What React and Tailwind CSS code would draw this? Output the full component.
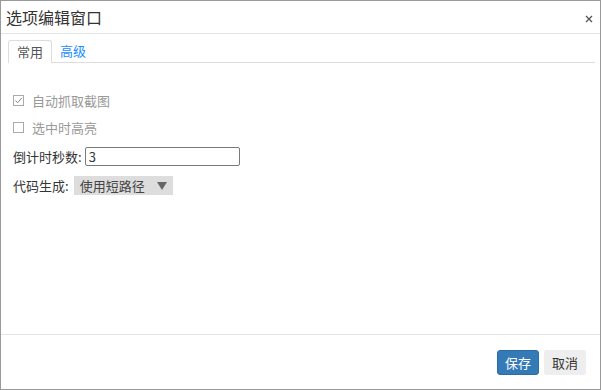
import React from 'react';

const font = { fontFamily: '"Noto Sans CJK SC", "Noto Sans", sans-serif' };

function CheckRow({ checked, label }) {
  return (
    <label className="flex items-center h-[27px] text-[13px] text-[#999]">
      <span className="ml-[5px] w-[11px] h-[11px] border border-[#aaa] bg-white flex items-center justify-center">
        {checked && (
          <svg width="9" height="9" viewBox="0 0 9 9">
            <path d="M1.5 4.5 L3.6 6.8 L7.8 1.8" fill="none" stroke="#888" strokeWidth="1" />
          </svg>
        )}
      </span>
      <span className="ml-[8px]">{label}</span>
    </label>
  );
}

export default function App() {
  return (
    <div className="w-[601px] h-[390px] bg-white border border-[#999] flex flex-col" style={font}>
      <div className="h-[33px] shrink-0 border-b border-[#e5e5e5] flex items-center justify-between pl-[5px] pr-[7px]">
        <span className="text-[16px] text-[#333]">选项编辑窗口</span>
        <svg width="8" height="8" viewBox="0 0 8 8" className="mt-[4px]">
          <path d="M1 1 L7 7 M7 1 L1 7" stroke="#555" strokeWidth="1.3" />
        </svg>
      </div>
      <div className="flex-1 pl-[7px] pr-[5px] pt-[6px]">
        <div className="flex border-b border-[#ddd] h-[23px] text-[13px]">
          <div className="px-[8px] border border-b-0 border-[#ddd] rounded-t-[3px] bg-white text-[#555] flex items-center h-[23px] -mb-px">常用</div>
          <div className="px-[8px] text-[#1a8cff] flex items-center">高级</div>
        </div>
        <div className="pt-[24px]">
          <CheckRow checked label="自动抓取截图" />
          <CheckRow label="选中时高亮" />
          <div className="flex items-center h-[29px] text-[13px] text-[#333] mt-[1px]">
            <span className="ml-[5px]">倒计时秒数:</span>
            <input defaultValue="3" className="ml-[3px] w-[155px] h-[19px] border border-[#7a7a7a] rounded-[2px] px-[3px] text-[13px] text-[#333] outline-none" style={font} />
          </div>
          <div className="flex items-center h-[29px] text-[13px] text-[#333]">
            <span className="ml-[5px]">代码生成:</span>
            <div className="ml-[5px] w-[99px] h-[19px] bg-[#ddd] flex items-center justify-between pl-[6px] pr-[6px] text-[#444]">
              <span>使用短路径</span>
              <svg width="10" height="8" viewBox="0 0 10 8"><path d="M0 0 L10 0 L5 8 Z" fill="#666" /></svg>
            </div>
          </div>
        </div>
      </div>
      <div className="h-[55px] shrink-0 border-t border-[#e5e5e5] flex items-start justify-end pt-[15px] pr-[14px] gap-[5px] text-[13px]">
        <button className="w-[42px] h-[25px] rounded-[3px] bg-[#337ab7] border border-[#2e6da4] text-white" style={font}>保存</button>
        <button className="w-[42px] h-[25px] rounded-[3px] bg-[#eee] text-[#333]" style={font}>取消</button>
      </div>
    </div>
  );
}
